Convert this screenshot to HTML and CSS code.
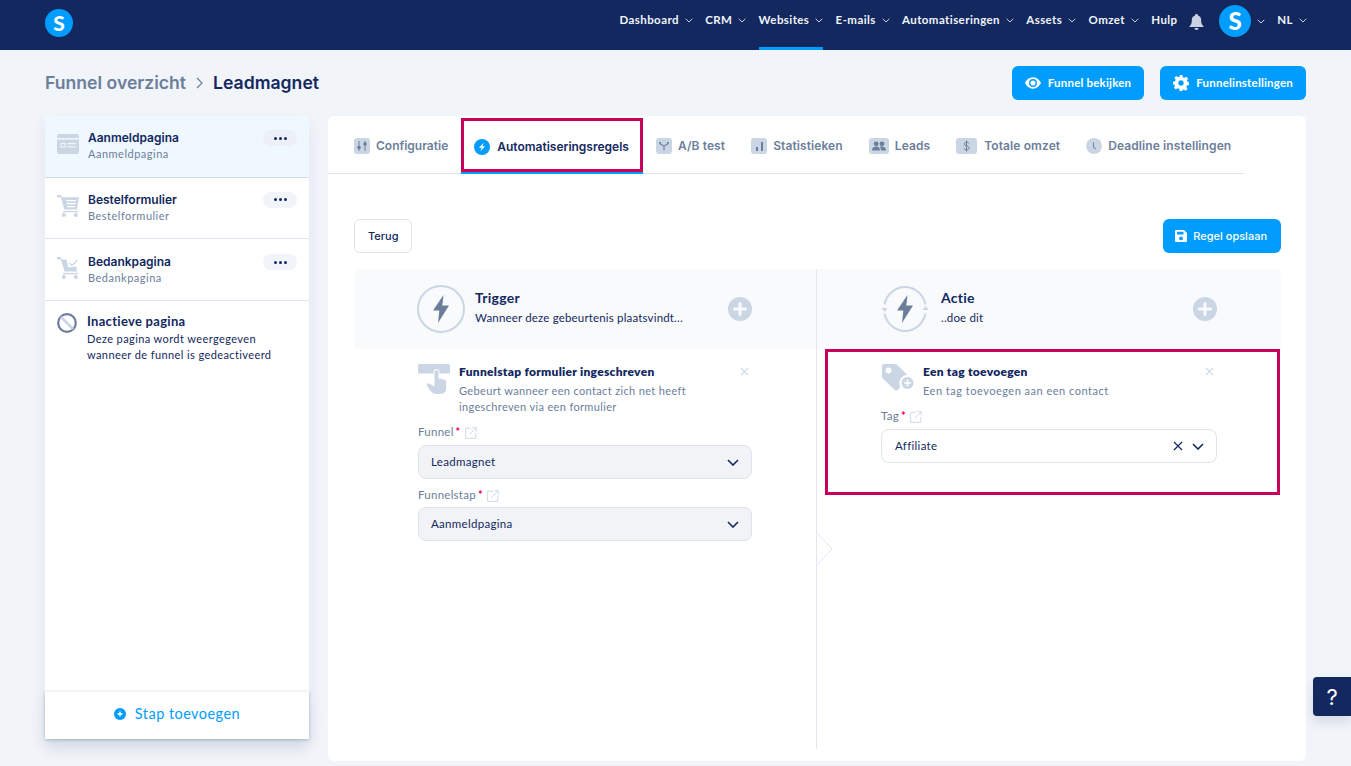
FILE: index.html
```html
<!DOCTYPE html>
<html lang="nl">
<head>
<meta charset="utf-8">
<title>Funnel overzicht</title>
<link rel="stylesheet" href="styles.css">
</head>
<body>
<svg class="defs" width="0" height="0" aria-hidden="true">
  <symbol id="chev" viewBox="0 0 8 5"><path d="M.7.8 4 4 7.3.8" fill="none" stroke="currentColor" stroke-width="1"/></symbol>
  <symbol id="bigchev" viewBox="0 0 12 7"><path d="M1 1l5 5 5-5" fill="none" stroke="currentColor" stroke-width="1.6"/></symbol>
  <symbol id="ext" viewBox="0 0 12 12"><path d="M6 1.2H.6v10.2h10.2V6M4.6 7.4 11 1M7.4.7h3.9v3.9" fill="none" stroke="currentColor" stroke-width=".9"/></symbol>
  <symbol id="x" viewBox="0 0 10 10"><path d="M1 1l8 8M9 1 1 9" fill="none" stroke="currentColor" stroke-width="1.2"/></symbol>
  <symbol id="plus" viewBox="0 0 24 24"><circle cx="12" cy="12" r="12" fill="#cbd6e4"/><path d="M12 6.500v11M6.500 12h11" stroke="#f9fafc" stroke-width="3" stroke-linecap="round"/></symbol>
  <symbol id="bolt" viewBox="0 0 16 28"><path d="M10.500 0 0 15.500h6.300L5 28 16 10.500H9.300z" fill="#6b7e9b"/></symbol>
</svg>

<header class="topbar">
  <div class="logo">S</div>
  <nav class="mainnav">
    <a class="navitem">Dashboard<svg class="navchev"><use href="#chev"/></svg></a>
    <a class="navitem">CRM<svg class="navchev"><use href="#chev"/></svg></a>
    <a class="navitem active">Websites<svg class="navchev"><use href="#chev"/></svg></a>
    <a class="navitem">E-mails<svg class="navchev"><use href="#chev"/></svg></a>
    <a class="navitem">Automatiseringen<svg class="navchev"><use href="#chev"/></svg></a>
    <a class="navitem">Assets<svg class="navchev"><use href="#chev"/></svg></a>
    <a class="navitem">Omzet<svg class="navchev"><use href="#chev"/></svg></a>
    <a class="navitem">Hulp</a>
    <svg class="bell" viewBox="0 0 15 16"><path d="M7.500 0C8.300 0 9 .6 9 1.400 11.300 2 12.200 4 12.200 6.500c0 3 .8 4.500 2.300 5.700.3.300.1.800-.3.800H.8c-.4 0-.6-.5-.3-.8C2 11 2.800 9.500 2.800 6.500 2.800 4 3.700 2 6 1.400 6 .6 6.700 0 7.500 0zM5.500 14h4c0 1.100-.9 2-2 2s-2-.9-2-2z" fill="#cbd3e2"/></svg>
    <a class="navitem avatar-item"><span class="avatar">S</span><svg class="navchev"><use href="#chev"/></svg></a>
    <a class="navitem">NL<svg class="navchev"><use href="#chev"/></svg></a>
  </nav>
</header>

<section class="pagehead">
  <div class="crumbs">
    <span class="crumb-parent">Funnel overzicht</span>
    <svg class="crumb-sep" viewBox="0 0 7 12"><path d="M1 1l5 5-5 5" fill="none" stroke="#6b7e9b" stroke-width="1.200"/></svg>
    <span class="crumb-current">Leadmagnet</span>
  </div>
  <div class="headactions">
    <button class="btn primary headbtn"><svg class="btnicon eye" viewBox="0 0 17 12"><path fill-rule="evenodd" d="M8.500 0C12.500 0 15.500 3 17 6c-1.500 3-4.500 6-8.500 6S1.500 9 0 6C1.500 3 4.500 0 8.500 0zm0 1.800a4.200 4.200 0 1 0 0 8.400 4.200 4.200 0 0 0 0-8.400zm0 1.500a2.700 2.700 0 1 1 0 5.400 2.700 2.700 0 0 1 0-5.400z" fill="#fff"/></svg>Funnel bekijken</button>
    <button class="btn primary headbtn"><svg class="btnicon gear" viewBox="0 0 24 24"><path fill-rule="evenodd" d="M10 0h4l.7 3.300 2.300 1 2.900-1.800 2.800 2.800L21 8.100l.9 2.200 2.100.7v4l-3.100.7-.9 2.300 1.800 2.800-2.800 2.800-2.900-1.800-2.200.9L14 24h-4l-.7-3.300-2.300-.9-2.900 1.800-2.800-2.800L3 17l-.9-2.300L0 14v-4l3.100-.7.9-2.200-1.800-2.800L5 1.500l2.900 1.800 2.200-.9zM12 8a4 4 0 1 0 0 8 4 4 0 0 0 0-8z" fill="#fff"/></svg>Funnelinstellingen</button>
  </div>
</section>

<main class="workspace">
  <aside class="sidebar">
    <div class="step current">
      <svg class="stepicon" viewBox="0 0 22 20"><path fill-rule="evenodd" d="M2 0h18a2 2 0 0 1 2 2v16a2 2 0 0 1-2 2H2a2 2 0 0 1-2-2V2a2 2 0 0 1 2-2zM0 4v1.500h22V4zM3.500 9v4.500h5V9zm1 1h3v2.500h-3zm6-1v1.200H19V9zm0 3.300v1.200H19v-1.200z" fill="#cbd6e4"/></svg>
      <div class="steptext"><div class="steptitle">Aanmeldpagina</div><div class="stepsub">Aanmeldpagina</div></div>
      <button class="dots"><i></i><i></i><i></i></button>
    </div>
    <div class="step">
      <svg class="stepicon cart" viewBox="0 0 22 22"><path fill-rule="evenodd" d="M0 0h4.200l.8 2.300h17L20 14.500H7.300L4 2.500 0 2zM9 5v1.300h10V5zm.5 3v1.300h9V8zm.5 3v1.200h8V11z" fill="#cbd6e4"/><path d="M6 16.600h15" stroke="#cbd6e4" stroke-width="1.400"/><circle cx="6.800" cy="20" r="2" fill="#cbd6e4"/><circle cx="18.800" cy="20" r="2" fill="#cbd6e4"/></svg>
      <div class="steptext"><div class="steptitle">Bestelformulier</div><div class="stepsub">Bestelformulier</div></div>
      <button class="dots"><i></i><i></i><i></i></button>
    </div>
    <div class="step lowered">
      <svg class="stepicon cart" viewBox="0 0 22 22"><path d="M0 0h3.500L5 2.500h4.500l2 8 8-1 .5 5H7.500L4 2.500 0 2z" fill="#cbd6e4"/><path d="M12.500 6l2.500 2.500 5.500-5.500" fill="none" stroke="#cbd6e4" stroke-width="1.300"/><path d="M6 16.600h15" stroke="#cbd6e4" stroke-width="1.400"/><circle cx="6.800" cy="20" r="2" fill="#cbd6e4"/><circle cx="18.800" cy="20" r="2" fill="#cbd6e4"/></svg>
      <div class="steptext"><div class="steptitle">Bedankpagina</div><div class="stepsub">Bedankpagina</div></div>
      <button class="dots"><i></i><i></i><i></i></button>
    </div>
    <div class="inactive">
      <svg class="inactiveicon" viewBox="0 0 20 20"><circle cx="10" cy="10" r="8.800" fill="none" stroke="#6b7e9b" stroke-width="2.200"/><path d="M4 4l12 12" stroke="#cbd6e4" stroke-width="2.600"/></svg>
      <div class="inactivetext">
        <div class="inactivetitle">Inactieve pagina</div>
        <div class="inactivesub">Deze pagina wordt weergegeven<br>wanneer de funnel is gedeactiveerd</div>
      </div>
    </div>
    <button class="addstep"><svg class="addicon" viewBox="0 0 12 12"><circle cx="6" cy="6" r="6" fill="#009dff"/><path d="M6 3.500v5M3.500 6h5" stroke="#fff" stroke-width="1.400"/></svg>Stap toevoegen</button>
  </aside>

  <section class="panel">
    <div class="tabs">
      <a class="tab"><svg class="tabicon" viewBox="0 0 16 16"><rect width="16" height="16" rx="3" fill="#cbd6e4"/><path d="M5 3v10M11 3v10" stroke="#6b7e9b" stroke-width="1"/><circle cx="5" cy="9.500" r="1.800" fill="#6b7e9b"/><circle cx="11" cy="6" r="1.800" fill="#6b7e9b"/></svg>Configuratie</a>
      <a class="tab selected"><svg class="tabicon" viewBox="0 0 16 16"><circle cx="8" cy="8" r="8" fill="#009dff"/><path d="M9.800 3.500 5 8.800h2.700L6.300 12.500 11 7.200H8.300z" fill="#fff"/></svg>Automatiseringsregels</a>
      <a class="tab"><svg class="tabicon" viewBox="0 0 16 16"><rect width="16" height="16" rx="3" fill="#cbd6e4"/><path d="M8 12.500V8L3.500 5.500M8 8l4.500-2.500" fill="none" stroke="#6b7e9b" stroke-width="1.100"/><path d="M2.500 4h2.500v2.200zM13.500 4H11v2.200z" fill="#6b7e9b"/></svg>A/B test</a>
      <a class="tab"><svg class="tabicon" viewBox="0 0 16 16"><rect width="16" height="16" rx="3" fill="#cbd6e4"/><path d="M5 9h2v4H5zM10 4h2v9h-2z" fill="#6b7e9b"/></svg>Statistieken</a>
      <a class="tab"><svg class="tabicon wide20" viewBox="0 0 20 16"><rect width="20" height="16" rx="3" fill="#cbd6e4"/><circle cx="7.200" cy="5.800" r="2.400" fill="#6b7e9b"/><circle cx="13" cy="5.800" r="2.400" fill="#6b7e9b"/><path d="M3 12.500c0-3 2-4 4.200-4s3.800 1 3.800 4zM12 12.500c0-1.500-.3-2.900-1.200-3.800 2.900-.8 6.200 0 6.200 3.800z" fill="#6b7e9b"/></svg>Leads</a>
      <a class="tab"><svg class="tabicon wide21" viewBox="0 0 21 16"><rect width="21" height="16" rx="3" fill="#cbd6e4"/><path d="M13 5.500c-.5-1-1.400-1.300-2.500-1.300-1.300 0-2.300.6-2.300 1.800 0 2.500 5 1.300 5 3.900 0 1.300-1.200 1.900-2.600 1.900-1.200 0-2.200-.4-2.700-1.400M10.500 2.500v11" fill="none" stroke="#6b7e9b" stroke-width="1"/></svg>Totale omzet</a>
      <a class="tab"><svg class="tabicon" viewBox="0 0 16 16"><circle cx="8" cy="8" r="8" fill="#cbd6e4"/><path d="M7.500 4.500V9.500L10 11" fill="none" stroke="#6b7e9b" stroke-width="1"/></svg>Deadline instellingen</a>
    </div>

    <div class="toolbar">
      <button class="btn ghost">Terug</button>
      <button class="btn primary save"><svg class="btnicon floppy" viewBox="0 0 12 12"><path fill-rule="evenodd" d="M1.300 0H9l3 3v7.700c0 .7-.6 1.300-1.300 1.300H1.300C.6 12 0 11.400 0 10.700V1.300C0 .6.600 0 1.300 0zM2 1.800v2.700h6.500V1.800zM6 6.500a1.900 1.900 0 1 0 0 3.800 1.900 1.900 0 0 0 0-3.800z" fill="#fff"/></svg>Regel opslaan</button>
    </div>

    <div class="rule">
      <div class="col trigger">
        <div class="colhead">
          <svg class="headicon" viewBox="0 0 48 48"><circle cx="24" cy="24" r="23" fill="none" stroke="#cbd6e4" stroke-width="2"/><use href="#bolt" x="16" y="10" width="16" height="28"/></svg>
          <div class="headtext"><div class="headtitle">Trigger</div><div class="headsub">Wanneer deze gebeurtenis plaatsvindt...</div></div>
          <svg class="headplus"><use href="#plus"/></svg>
        </div>
        <div class="colbody">
          <div class="card">
            <svg class="cardicon" viewBox="0 0 32 30"><path d="M1.500 0h29A1.500 1.500 0 0 1 32 1.500V8a1.500 1.500 0 0 1-1.500 1.500H21.500V8a3 3 0 0 0-6 0v1.500H1.500A1.500 1.500 0 0 1 0 8V1.500A1.500 1.500 0 0 1 1.500 0z" fill="#cbd6e4"/><path d="M16.500 8a2 2 0 0 1 4 0v6.500l6 1.200c1.300.3 1.700 1.300 1.700 2.500V24c0 3-2 6-6 6h-4c-2.500 0-4-1-5.500-3l-3.700-5c-1-2 1-3.500 2.700-2.200l4.800 2.700z" fill="#cbd6e4"/></svg>
            <div class="cardtext"><div class="cardtitle">Funnelstap formulier ingeschreven</div><div class="cardsub">Gebeurt wanneer een contact zich net heeft<br>ingeschreven via een formulier</div></div>
            <svg class="cardclose"><use href="#x"/></svg>
          </div>
          <div class="field">
            <label class="fieldlabel">Funnel<span class="req">*</span><svg class="extlink"><use href="#ext"/></svg></label>
            <div class="select filled"><span>Leadmagnet</span><svg class="selchev"><use href="#bigchev"/></svg></div>
          </div>
          <div class="field second">
            <label class="fieldlabel">Funnelstap<span class="req">*</span><svg class="extlink"><use href="#ext"/></svg></label>
            <div class="select filled"><span>Aanmeldpagina</span><svg class="selchev"><use href="#bigchev"/></svg></div>
          </div>
        </div>
      </div>

      <div class="col action">
        <svg class="notch" viewBox="0 0 17 34"><path d="M1 0 16 16 1 32" fill="#fff" stroke="#e3e6ee"/></svg>
        <div class="colhead">
          <svg class="headicon" viewBox="0 0 48 48"><path d="M3.500 19.500C5.500 9.500 14 2 24 2s18.500 7.500 20.500 17.500M44.500 28.500C42.500 38.500 34 46 24 46S5.500 38.500 3.500 28.500" fill="none" stroke="#cbd6e4" stroke-width="2"/><path d="M.5 23h6l-3 4zM41.500 25h6l-3-4z" fill="#cbd6e4"/><use href="#bolt" x="16" y="10" width="16" height="28"/></svg>
          <div class="headtext"><div class="headtitle">Actie</div><div class="headsub">..doe dit</div></div>
          <svg class="headplus"><use href="#plus"/></svg>
        </div>
        <div class="highlightbox">
          <div class="card">
            <svg class="cardicon tagicon" viewBox="0 0 32 27"><path d="M2 0h11c1 0 1.700.3 2.400 1l10 10c-4.300 0-8 3.500-8 8 0 1.500.4 3 1.100 4l-2.900 2.900c-.8.800-2 .8-2.800 0L.8 14.500C.300 14 0 13.300 0 12.500V2C0 .9.900 0 2 0zm4.500 3.500a3 3 0 1 0 0 6 3 3 0 0 0 0-6z" fill-rule="evenodd" fill="#cbd6e4"/><circle cx="25.500" cy="19" r="6" fill="#cbd6e4"/><path d="M25.500 15.500v7M22 19h7" stroke="#fff" stroke-width="1.600"/></svg>
            <div class="cardtext tagtext"><div class="cardtitle">Een tag toevoegen</div><div class="cardsub">Een tag toevoegen aan een contact</div></div>
            <svg class="cardclose"><use href="#x"/></svg>
          </div>
          <div class="field tagfield">
            <label class="fieldlabel">Tag<span class="req">*</span><svg class="extlink"><use href="#ext"/></svg></label>
            <div class="select tagselect"><span>Affiliate</span><svg class="selx"><use href="#x"/></svg><svg class="selchev"><use href="#bigchev"/></svg></div>
          </div>
        </div>
      </div>
    </div>
  </section>
</main>

<button class="helpbtn">?</button>
</body>
</html>
```

FILE: styles.css
```css
* { box-sizing: border-box; }
html, body { margin: 0; padding: 0; }
body {
  width: 1351px;
  height: 766px;
  overflow: hidden;
  position: relative;
  background: #f1f4f9;
  font-family: "Lato", "Liberation Sans", sans-serif;
  color: #12285f;
}
.defs { position: absolute; }
button { font-family: inherit; cursor: pointer; }

/* top bar */
.topbar {
  height: 50px;
  background: #12285f;
  display: flex;
  align-items: flex-start;
  justify-content: space-between;
  padding: 0 44px 0 45px;
}
.logo {
  width: 28px;
  height: 28px;
  margin-top: 9px;
  border-radius: 50%;
  background: #009dff;
  color: #fff;
  font-weight: 900;
  font-size: 21px;
  line-height: 28px;
  text-align: center;
}
.mainnav { display: flex; align-items: flex-start; gap: 12.250px; height: 50px; }
.navitem {
  height: 50px;
  display: flex;
  align-items: flex-start;
  gap: 6px;
  padding-top: 13px;
  color: #f1f4f9;
  font-size: 11.500px;
  line-height: 14px;
  font-weight: 700;
  letter-spacing: .42px;
  white-space: nowrap;
}
.navitem.active { box-shadow: inset 0 -3px 0 #009dff; }
.navchev { width: 8px; height: 5px; margin-top: 5px; color: #cbd3e2; }
.bell { width: 15px; height: 16px; margin: 14px 3px 0 -1px; }
.avatar-item { padding-top: 5px; }
.avatar {
  width: 32px;
  height: 32px;
  border-radius: 50%;
  background: #009dff;
  color: #fff;
  font-weight: 900;
  font-size: 24px;
  line-height: 32px;
  text-align: center;
  letter-spacing: 0;
}
.avatar-item .navchev { margin-top: 14px; }

/* page head */
.pagehead {
  height: 66px;
  padding: 16px 45px 0;
  display: flex;
  justify-content: space-between;
  align-items: flex-start;
}
.crumbs { display: flex; align-items: center; height: 33px; font-family: "Inter", sans-serif; font-size: 17.600px; font-weight: 600; }
.crumb-parent { color: #6b7e9b; }
.crumb-sep { width: 7px; height: 12px; margin: 0 10px; }
.crumb-current { color: #12285f; }
.headactions { display: flex; gap: 16px; }
.btn {
  height: 34px;
  border-radius: 6px;
  border: 0;
  display: inline-flex;
  align-items: center;
  font-size: 11.500px;
  font-weight: 700;
  letter-spacing: .2px;
  padding: 0 13px;
  white-space: nowrap;
}
.btn.primary { background: #009dff; color: #fff; }
.headbtn { padding-bottom: 1px; }
.btnicon { margin-right: 7px; }
.eye { width: 16px; height: 12px; }
.gear { width: 16px; height: 16px; }
.btn.ghost {
  background: #fff;
  border: 1px solid #dfe4ec;
  color: #12285f;
  font-family: "Inter", sans-serif;
  font-weight: 500;
  font-size: 11px;
  letter-spacing: 0;
}
.btn.save { font-family: "Inter", sans-serif; font-weight: 500; font-size: 11px; letter-spacing: 0; padding: 0 14px 0 12px; }
.floppy { width: 12px; height: 12px; margin-right: 6px; }

/* layout */
.workspace { display: flex; align-items: flex-start; gap: 19px; padding-left: 45px; }

/* sidebar */
.sidebar {
  width: 264px;
  height: 623px;
  background: #fff;
  display: flex;
  flex-direction: column;
  box-shadow: 0 8px 16px rgba(18, 40, 95, .07);
}
.step {
  height: 61.670px;
  flex: none;
  display: flex;
  align-items: flex-start;
  padding: 14px 12px 0;
  border-bottom: 1px solid #dfe4ee;
}
.step.lowered { padding-top: 15px; }
.step.current { background: #f0f8ff; border-bottom-color: #cfdbe8; }
.stepicon { width: 22px; height: 20px; margin: 4px 9px 0 0; flex: none; }
.stepicon.cart { height: 22px; margin-top: 3px; }
.steptext { flex: 1; }
.steptitle { font-family: "Inter", sans-serif; font-weight: 600; font-size: 12px; line-height: 15px; }
.stepsub { font-size: 11px; line-height: 14px; margin-top: 2px; color: #6b7e9b; letter-spacing: .5px; }
.dots {
  width: 34px;
  height: 16px;
  border: 0;
  border-radius: 8px;
  background: #f1f4f9;
  display: flex;
  align-items: center;
  justify-content: center;
  gap: 2px;
  padding: 0;
}
.current .dots { background: #edf1f7; }
.dots i { width: 3px; height: 3px; border-radius: 50%; background: #12285f; }
.inactive { display: flex; align-items: flex-start; padding: 12px 12px 0; gap: 10px; }
.inactiveicon { width: 20px; height: 20px; flex: none; }
.inactivetitle { font-size: 13px; line-height: 16px; font-weight: 700; letter-spacing: .3px; }
.inactivesub { font-size: 11px; line-height: 16px; margin-top: 2px; letter-spacing: .4px; }
.addstep {
  margin-top: auto;
  height: 48px;
  border: 0;
  border-top: 1px solid #f1f4f9;
  background: #fff;
  color: #009dff;
  font-size: 14.500px;
  letter-spacing: .45px;
  display: flex;
  align-items: center;
  justify-content: center;
  padding: 0 0 4px;
  box-shadow: 0 1px 3px rgba(18, 40, 95, .25), 0 8px 14px rgba(18, 40, 95, .07);
}
.addicon { width: 12px; height: 12px; margin: 1px 9px 0 0; }

/* panel */
.panel {
  width: 978px;
  height: 645px;
  background: #fff;
  border-radius: 6px;
  padding: 0 25px 0 26px;
}
.tabs {
  width: 916px;
  margin-left: -26px;
  height: 58px;
  padding-left: 13px;
  display: flex;
  border-bottom: 1px solid #e0e3ee;
  font-family: "Inter", sans-serif;
}
.tab {
  height: 57px;
  padding: 2px 13px 0;
  display: flex;
  align-items: center;
  gap: 6px;
  color: #6b7e9b;
  font-size: 12px;
  font-weight: 600;
  letter-spacing: .1px;
  white-space: nowrap;
}
.tab:first-child { letter-spacing: 0; }
.tabicon { width: 16px; height: 16px; flex: none; }
.wide20 { width: 20px; }
.wide21 { width: 21px; margin-right: 1px; }
.tab.selected {
  color: #12285f;
  gap: 7px;
  letter-spacing: 0;
  box-shadow: inset 0 -3px 0 #c8005a, 0 2px 0 #009dff;
  border: 3px solid #c8005a;
  border-bottom: 0;
  height: 54px;
  margin-top: 2px;
  padding: 0 11px 0 10px;
}
.toolbar { display: flex; justify-content: space-between; margin-top: 45px; }
.rule { display: flex; margin-top: 16px; height: 480px; }
.col { width: 463px; flex: none; }
.col.trigger { border-right: 1px solid #e3e6ee; }
.col.action { width: 464px; position: relative; }
.notch { position: absolute; left: -1px; top: 264px; width: 17px; height: 34px; }
.colhead {
  height: 80px;
  background: #f9fafc;
  display: flex;
  align-items: center;
  padding: 0 64px 0 63px;
}
.trigger .colhead { border-top-left-radius: 6px; }
.action .colhead { border-top-right-radius: 6px; padding-left: 64px; }
.headicon { width: 48px; height: 48px; flex: none; margin-right: 10px; }
.action .headicon { margin-right: 12px; }
.headtext { flex: 1; padding-bottom: 3px; }
.headtitle { font-size: 14px; line-height: 18px; font-weight: 700; letter-spacing: .25px; }
.headsub { font-size: 11.500px; line-height: 16px; margin-top: 3px; letter-spacing: .17px; }
.headplus { width: 24px; height: 24px; }
.colbody { padding: 15px 64px 0; }
.card { display: flex; align-items: flex-start; }
.cardicon { width: 32px; height: 30px; flex: none; margin-right: 9px; }
.tagicon { height: 27px; margin-left: 1px; }
.cardtext { flex: 1; }
.cardtitle { font-size: 12px; line-height: 16px; font-weight: 800; letter-spacing: .28px; }
.cardsub { font-size: 11px; line-height: 16px; margin-top: 3px; color: #6b7e9b; letter-spacing: .35px; }
.tagtext .cardsub { letter-spacing: .5px; }
.cardclose { width: 9px; height: 9px; color: #cbd6e4; margin: 3px 3px 0 0; flex: none; }
.field { margin-top: 10px; }
.field.second { margin-top: 9px; }
.fieldlabel { display: flex; align-items: flex-start; height: 20px; font-size: 11.500px; line-height: 14px; color: #6b7e9b; letter-spacing: .25px; }
.second .fieldlabel { height: 19px; }
.req { color: #f0004f; margin: 1px 0 0 2px; font-size: 11px; font-weight: 900; line-height: 12px; }
.extlink { width: 12px; height: 12px; color: #cbd6e4; margin: 2px 0 0 4px; }
.select {
  height: 34px;
  border: 1px solid #dfe4ec;
  border-radius: 8px;
  display: flex;
  align-items: center;
  padding: 0 12px;
  font-size: 11.500px;
  letter-spacing: .3px;
}
.select span { flex: 1; padding-bottom: 2px; }
.select.filled { background: #f2f3f6; }
.select.tagselect { padding-left: 13px; }
.selchev { width: 12px; height: 7px; color: #12285f; }
.selx { width: 10px; height: 10px; margin-right: 9px; color: #12285f; }
.highlightbox {
  width: 455px;
  height: 146px;
  margin-left: 8px;
  border: 3px solid #c8005a;
  padding: 12px 60px 0 53px;
  background: #fff;
}
.tagfield { margin-top: 10px; }

/* help */
.helpbtn {
  position: absolute;
  right: 0;
  top: 677px;
  width: 38px;
  height: 39px;
  background: #12285f;
  color: #fff;
  border: 0;
  border-radius: 4px 0 0 4px;
  font-family: "Inter", sans-serif;
  font-size: 22px;
  font-weight: 400;
  box-shadow: 0 6px 12px rgba(18, 40, 95, .12);
}
```
